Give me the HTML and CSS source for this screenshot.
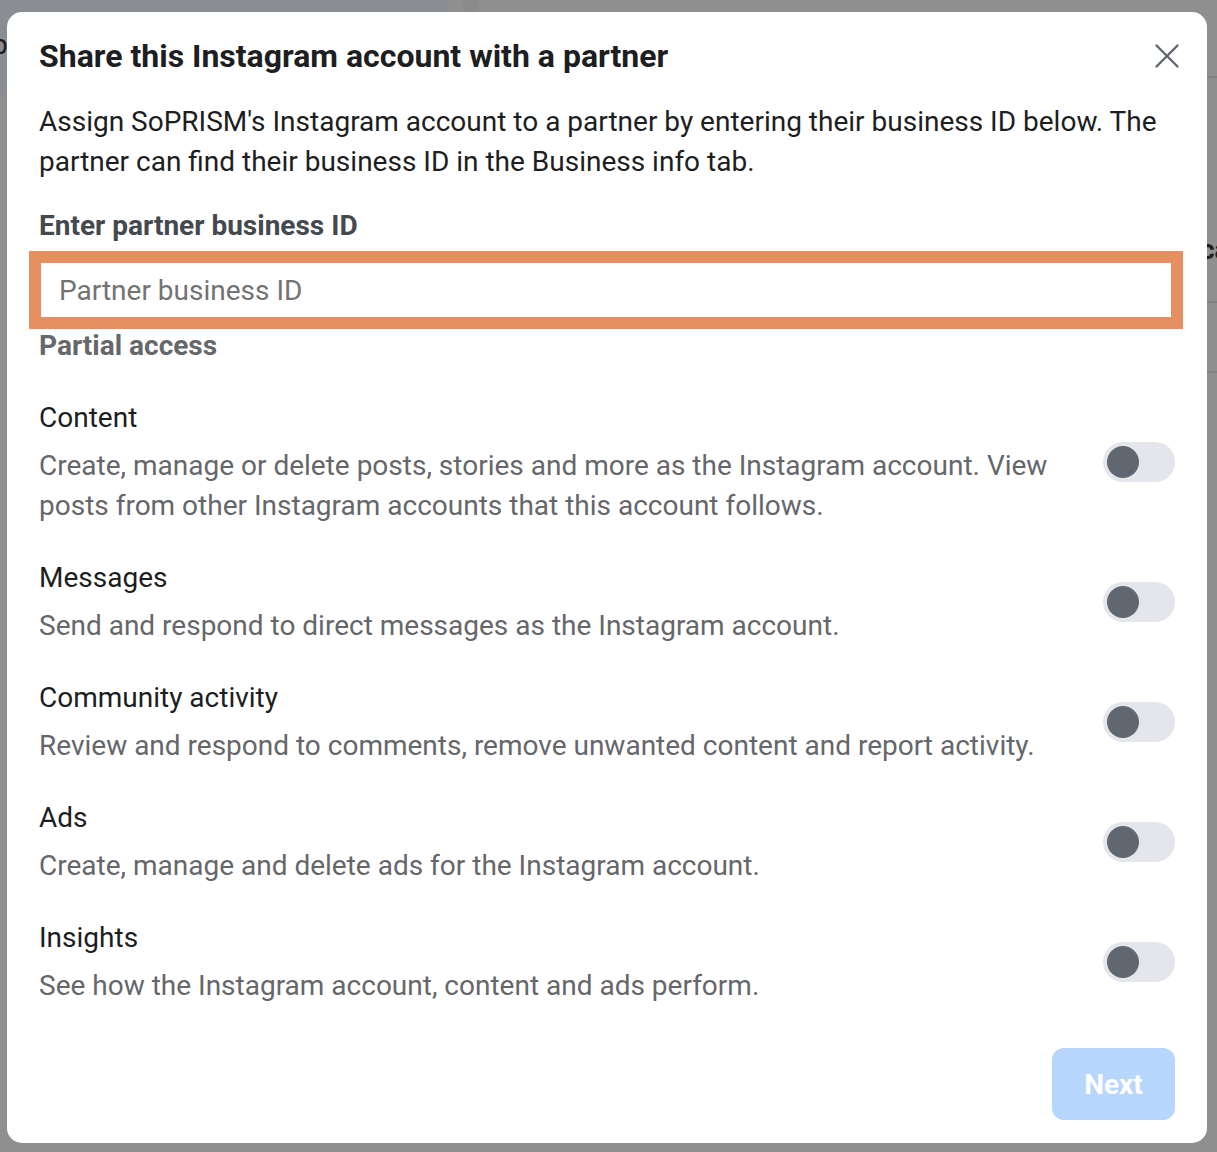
FILE: index.html
```html
<!DOCTYPE html>
<html lang="en">
<head>
<meta charset="utf-8">
<title>Share this Instagram account with a partner</title>
<link rel="stylesheet" href="styles.css">
</head>
<body>
<div class="backdrop">
  <div class="bg-nav"><span class="bg-letter">p</span></div>
  <div class="bg-strip"></div>
  <div class="bg-line bg-line-1"></div>
  <div class="bg-line bg-line-2"></div>
  <div class="bg-line bg-line-3"></div>
  <span class="bg-peek">ca</span>
</div>

<div class="modal" role="dialog" aria-labelledby="dlg-title">
  <div class="modal-header">
    <h1 id="dlg-title" class="modal-title">Share this Instagram account with a partner</h1>
    <button class="close-btn" aria-label="Close">
      <svg width="24" height="24" viewBox="0 0 24 24"><path d="M1.5 1.5 L22.5 22.5 M22.5 1.5 L1.5 22.5" stroke="#606770" stroke-width="2.4" stroke-linecap="round" fill="none"/></svg>
    </button>
  </div>

  <p class="modal-desc">Assign SoPRISM's Instagram account to a partner by entering their business ID below. The partner can find their business ID in the Business info tab.</p>

  <div class="field-label">Enter partner business ID</div>
  <div class="input-highlight">
    <input class="text-input" type="text" placeholder="Partner business ID">
  </div>

  <div class="section-label">Partial access</div>

  <div class="perm-list">
    <div class="perm-row">
      <div class="perm-text">
        <div class="perm-title">Content</div>
        <div class="perm-desc">Create, manage or delete posts, stories and more as the Instagram account. View posts from other Instagram accounts that this account follows.</div>
      </div>
      <div class="toggle"><span class="knob"></span></div>
    </div>
    <div class="perm-row">
      <div class="perm-text">
        <div class="perm-title">Messages</div>
        <div class="perm-desc">Send and respond to direct messages as the Instagram account.</div>
      </div>
      <div class="toggle"><span class="knob"></span></div>
    </div>
    <div class="perm-row">
      <div class="perm-text">
        <div class="perm-title">Community activity</div>
        <div class="perm-desc">Review and respond to comments, remove unwanted content and report activity.</div>
      </div>
      <div class="toggle"><span class="knob"></span></div>
    </div>
    <div class="perm-row">
      <div class="perm-text">
        <div class="perm-title">Ads</div>
        <div class="perm-desc">Create, manage and delete ads for the Instagram account.</div>
      </div>
      <div class="toggle"><span class="knob"></span></div>
    </div>
    <div class="perm-row">
      <div class="perm-text">
        <div class="perm-title">Insights</div>
        <div class="perm-desc">See how the Instagram account, content and ads perform.</div>
      </div>
      <div class="toggle"><span class="knob"></span></div>
    </div>
  </div>

  <div class="modal-footer">
    <button class="next-btn" disabled>Next</button>
  </div>
</div>
</body>
</html>
```

FILE: styles.css
```css
* { box-sizing: border-box; }

html, body {
  margin: 0;
  padding: 0;
}

body {
  width: 1217px;
  height: 1152px;
  overflow: hidden;
  background: #8f8f8f;
  font-family: Roboto, "Liberation Sans", Arial, sans-serif;
  position: relative;
}

/* dimmed page behind the dialog */
.backdrop {
  position: absolute;
  inset: 0;
}
.bg-nav {
  position: absolute;
  left: 0;
  top: 0;
  width: 447px;
  height: 95px;
  background: #8a8d94;
}
.bg-letter {
  position: absolute;
  left: -8px;
  top: 28px;
  font-size: 28px;
  color: #1c1e21;
}
.bg-strip {
  position: absolute;
  left: 463px;
  top: 0;
  width: 15px;
  height: 12px;
  background: #8b8b8b;
}
.bg-line {
  position: absolute;
  left: 1207px;
  width: 10px;
  height: 2px;
  background: #808080;
}
.bg-line-1 { top: 76px; }
.bg-line-2 { top: 301px; }
.bg-line-3 { top: 371px; }
.bg-peek {
  position: absolute;
  left: 1200px;
  top: 233px;
  font-size: 28px;
  font-weight: 700;
  color: #1c1e21;
}

/* dialog */
.modal {
  position: absolute;
  left: 7px;
  top: 12px;
  width: 1200px;
  height: 1131px;
  background: #ffffff;
  border-radius: 15px;
  padding: 24px 32px 23px 32px;
  display: flex;
  flex-direction: column;
}

.modal-header {
  display: flex;
  align-items: center;
  justify-content: space-between;
  height: 40px;
}
.modal-title {
  margin: 0;
  font-size: 32px;
  font-weight: 700;
  line-height: 40px;
  color: #1c1e21;
}
.close-btn {
  border: 0;
  background: none;
  padding: 0;
  width: 24px;
  height: 24px;
  margin-right: -4px;
  margin-top: 0;
  display: flex;
}

.modal-desc {
  margin: 26px 0 0 0;
  font-size: 28px;
  line-height: 40px;
  color: #1c1e21;
}

.field-label {
  margin-top: 24px;
  font-size: 28px;
  font-weight: 700;
  line-height: 40px;
  color: #444950;
}

.input-highlight {
  margin: 5px -8px 0 -10px;
  height: 78px;
  border: 12px solid #e69062;
  background: #ffffff;
}
.text-input {
  width: 100%;
  height: 100%;
  border: 0;
  outline: none;
  padding: 0 18px;
  font-family: inherit;
  font-size: 28px;
  color: #1c1e21;
  background: transparent;
}
.text-input::placeholder {
  color: #737373;
}

.section-label {
  margin-top: 1px;
  font-size: 28px;
  font-weight: 700;
  line-height: 32px;
  color: #65676b;
}

.perm-list {
  margin-top: 36px;
  display: flex;
  flex-direction: column;
  gap: 32px;
}
.perm-row {
  display: flex;
  align-items: center;
  gap: 40px;
}
.perm-text {
  flex: 1;
  display: flex;
  flex-direction: column;
  gap: 8px;
}
.perm-title {
  font-size: 28px;
  line-height: 40px;
  color: #1c1e21;
}
.perm-desc {
  font-size: 28px;
  line-height: 40px;
  color: #65676b;
}

.toggle {
  flex: none;
  width: 72px;
  height: 40px;
  border-radius: 20px;
  background: #e4e6eb;
  position: relative;
}
.knob {
  position: absolute;
  left: 4px;
  top: 4px;
  width: 32px;
  height: 32px;
  border-radius: 50%;
  background: #606770;
}

.modal-footer {
  margin-top: auto;
  display: flex;
  justify-content: flex-end;
}
.next-btn {
  width: 123px;
  height: 72px;
  border: 0;
  border-radius: 12px;
  background: #b7d6fb;
  color: #ffffff;
  font-family: inherit;
  font-size: 28px;
  font-weight: 700;
}
```
